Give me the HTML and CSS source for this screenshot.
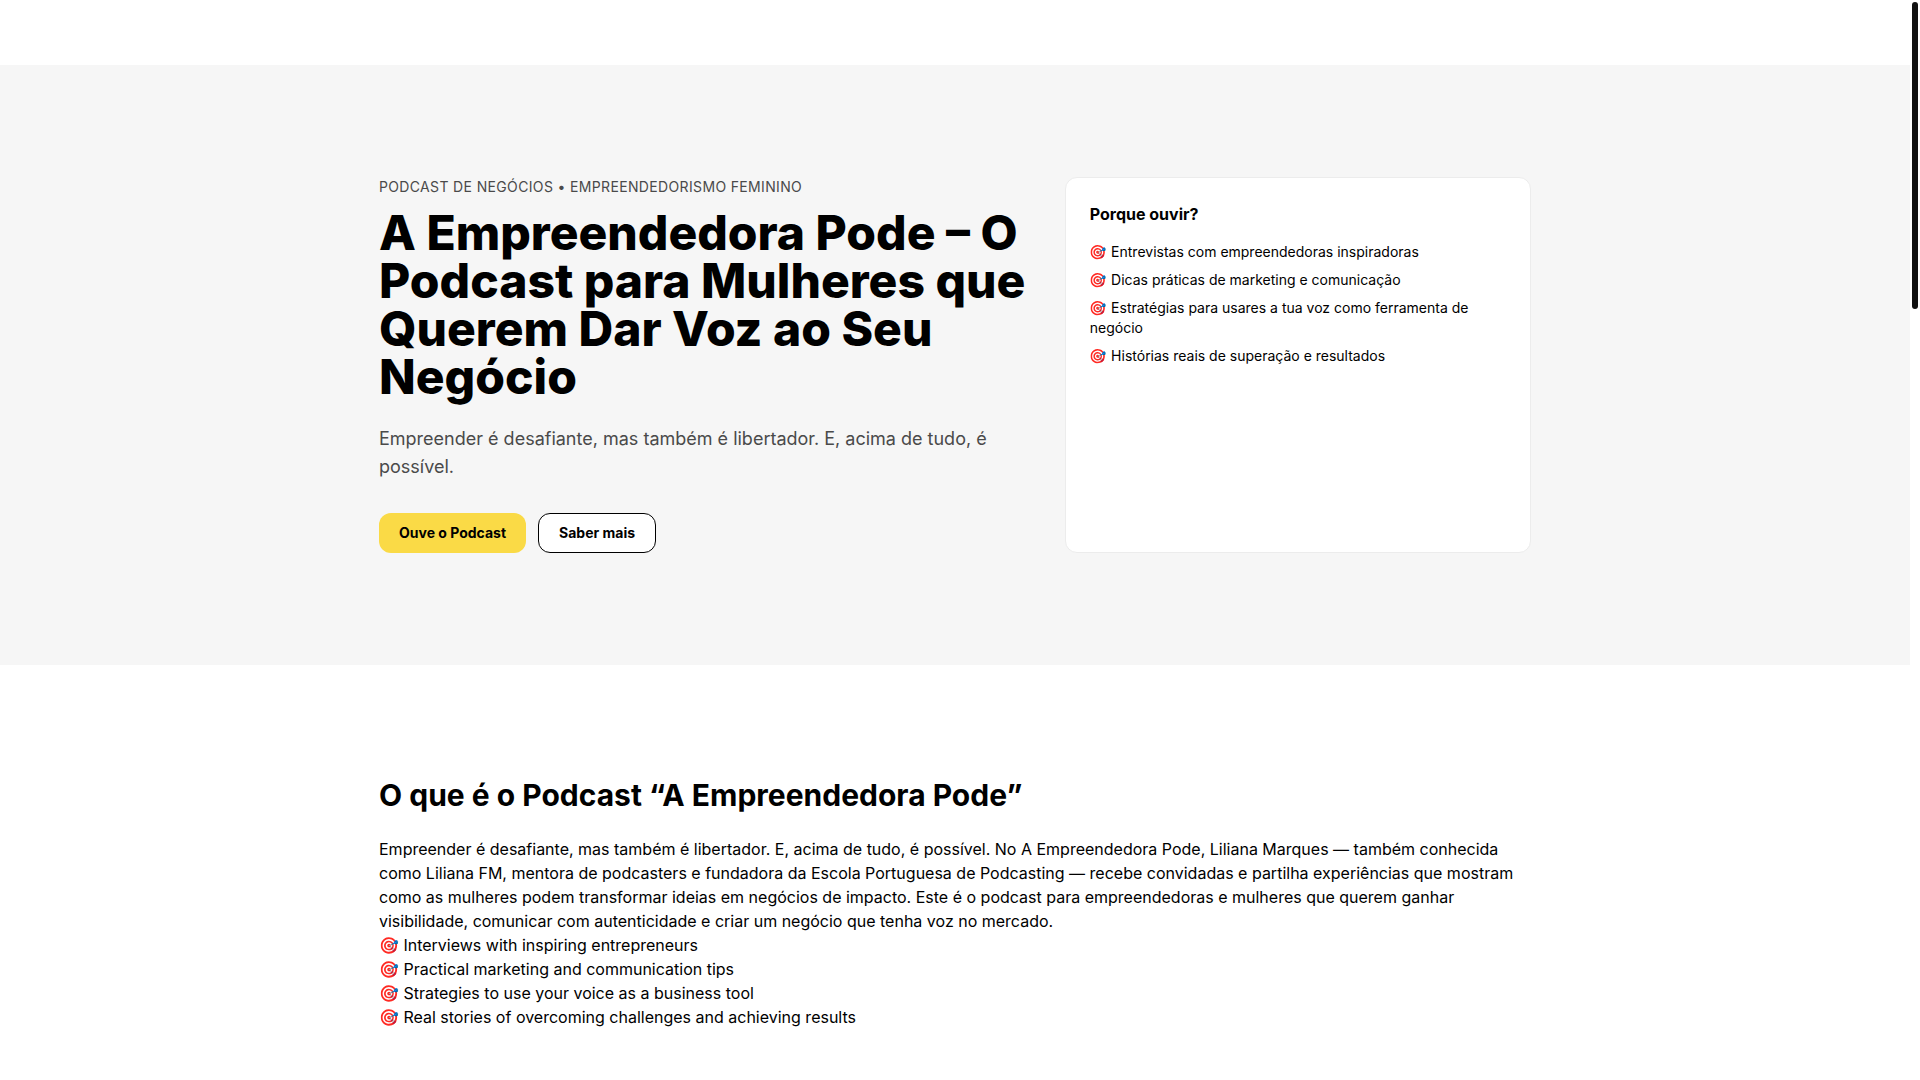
FILE: index.html
```html
<!DOCTYPE html>
<html lang="pt">
<head>
    <meta charset="UTF-8">
    <meta name="viewport" content="width=device-width, initial-scale=1.0">
    <title>A Empreendedora Pode</title>
    <link rel="stylesheet" href="styles.css">
</head>
<body>

    <div class="page">
        <header class="header"></header>

        <main>
            <section class="hero">
                <div class="container hero-grid">
                    <div>
                        <p class="eyebrow">Podcast de Negócios • Empreendedorismo Feminino</p>
                        <h1>A Empreendedora Pode – O Podcast para Mulheres que Querem Dar Voz ao Seu Negócio</h1>
                        <p class="lead">Empreender é desafiante, mas também é libertador. E, acima de tudo, é possível.</p>
                        <div class="actions">
                            <a class="btn btn-primary" href="#ouvir">Ouve o Podcast</a>
                            <a class="btn btn-outline" href="#sobre">Saber mais</a>
                        </div>
                    </div>

                    <aside class="card">
                        <h3>Porque ouvir?</h3>
                        <ul class="card-list">
                            <li>🎯 Entrevistas com empreendedoras inspiradoras</li>
                            <li>🎯 Dicas práticas de marketing e comunicação</li>
                            <li>🎯 Estratégias para usares a tua voz como ferramenta de negócio</li>
                            <li>🎯 Histórias reais de superação e resultados</li>
                        </ul>
                    </aside>
                </div>
            </section>

            <section class="about" id="sobre">
                <div class="container">
                    <h2>O que é o Podcast “A Empreendedora Pode”</h2>
                    <p>Empreender é desafiante, mas também é libertador. E, acima de tudo, é possível. No A Empreendedora Pode, Liliana Marques — também conhecida como Liliana FM, mentora de podcasters e fundadora da Escola Portuguesa de Podcasting — recebe convidadas e partilha experiências que mostram como as mulheres podem transformar ideias em negócios de impacto. Este é o podcast para empreendedoras e mulheres que querem ganhar visibilidade, comunicar com autenticidade e criar um negócio que tenha voz no mercado.</p>
                    <ul>
                        <li>🎯 Interviews with inspiring entrepreneurs</li>
                        <li>🎯 Practical marketing and communication tips</li>
                        <li>🎯 Strategies to use your voice as a business tool</li>
                        <li>🎯 Real stories of overcoming challenges and achieving results</li>
                    </ul>
                </div>
            </section>
        </main>
    </div>

    <div class="scroll-track" aria-hidden="true">
        <div class="scroll-thumb"></div>
    </div>

</body>
</html>
```

FILE: styles.css
```css
* { box-sizing: border-box; margin: 0; padding: 0; }
body { display: flex; min-height: 100vh; font-family: Inter, "Noto Color Emoji", sans-serif; font-size: 16px; line-height: 24px; font-optical-sizing: none; color: #000; background-color: #fff; }
ul { list-style: none; }
.page { flex: 1; min-width: 0; }
.header { height: 65px; background-color: #fff; }
.container { max-width: 1200px; margin: 0 auto; padding: 0 24px; }

/* Hero */
.hero { background-color: #f6f6f6; padding: 112px 0; }
.hero-grid { display: grid; grid-template-columns: 1.4fr 1fr; gap: 33px; }
.eyebrow { font-size: 14px; line-height: 20px; letter-spacing: 0.35px; text-transform: uppercase; color: #4a4a4a; margin-bottom: 12px; }
h1 { font-size: 48px; line-height: 48px; font-weight: 800; margin-bottom: 24px; }
.lead { font-size: 18px; line-height: 28px; color: #4a4a4a; margin-bottom: 32px; }
.actions { display: flex; flex-wrap: wrap; gap: 12px; }
.btn { font-size: 14px; line-height: 20px; font-weight: 700; color: #000; text-decoration: none; padding: 10px 20px; border-radius: 12px; }
.btn-primary { background-color: #fada46; }
.btn-outline { padding: 9px 20px; background-color: #fff; border: 1px solid #000; }

/* Card */
.card { background-color: #fff; border: 1px solid #ececec; border-radius: 12px; padding: 24px; }
.card h3 { font-size: 16px; line-height: 24px; font-weight: 700; margin-bottom: 16px; }
.card-list { display: grid; gap: 8px; font-size: 14px; line-height: 20px; }

/* About */
.about { padding: 112px 0 48px; }
.about h2 { font-size: 30px; line-height: 36px; font-weight: 700; margin-bottom: 24px; }

/* Scrollbar */
.scroll-track { width: 10px; padding: 2px; background-color: #fff; }
.scroll-thumb { height: 307px; border-radius: 3px; background-color: #111; }
```
